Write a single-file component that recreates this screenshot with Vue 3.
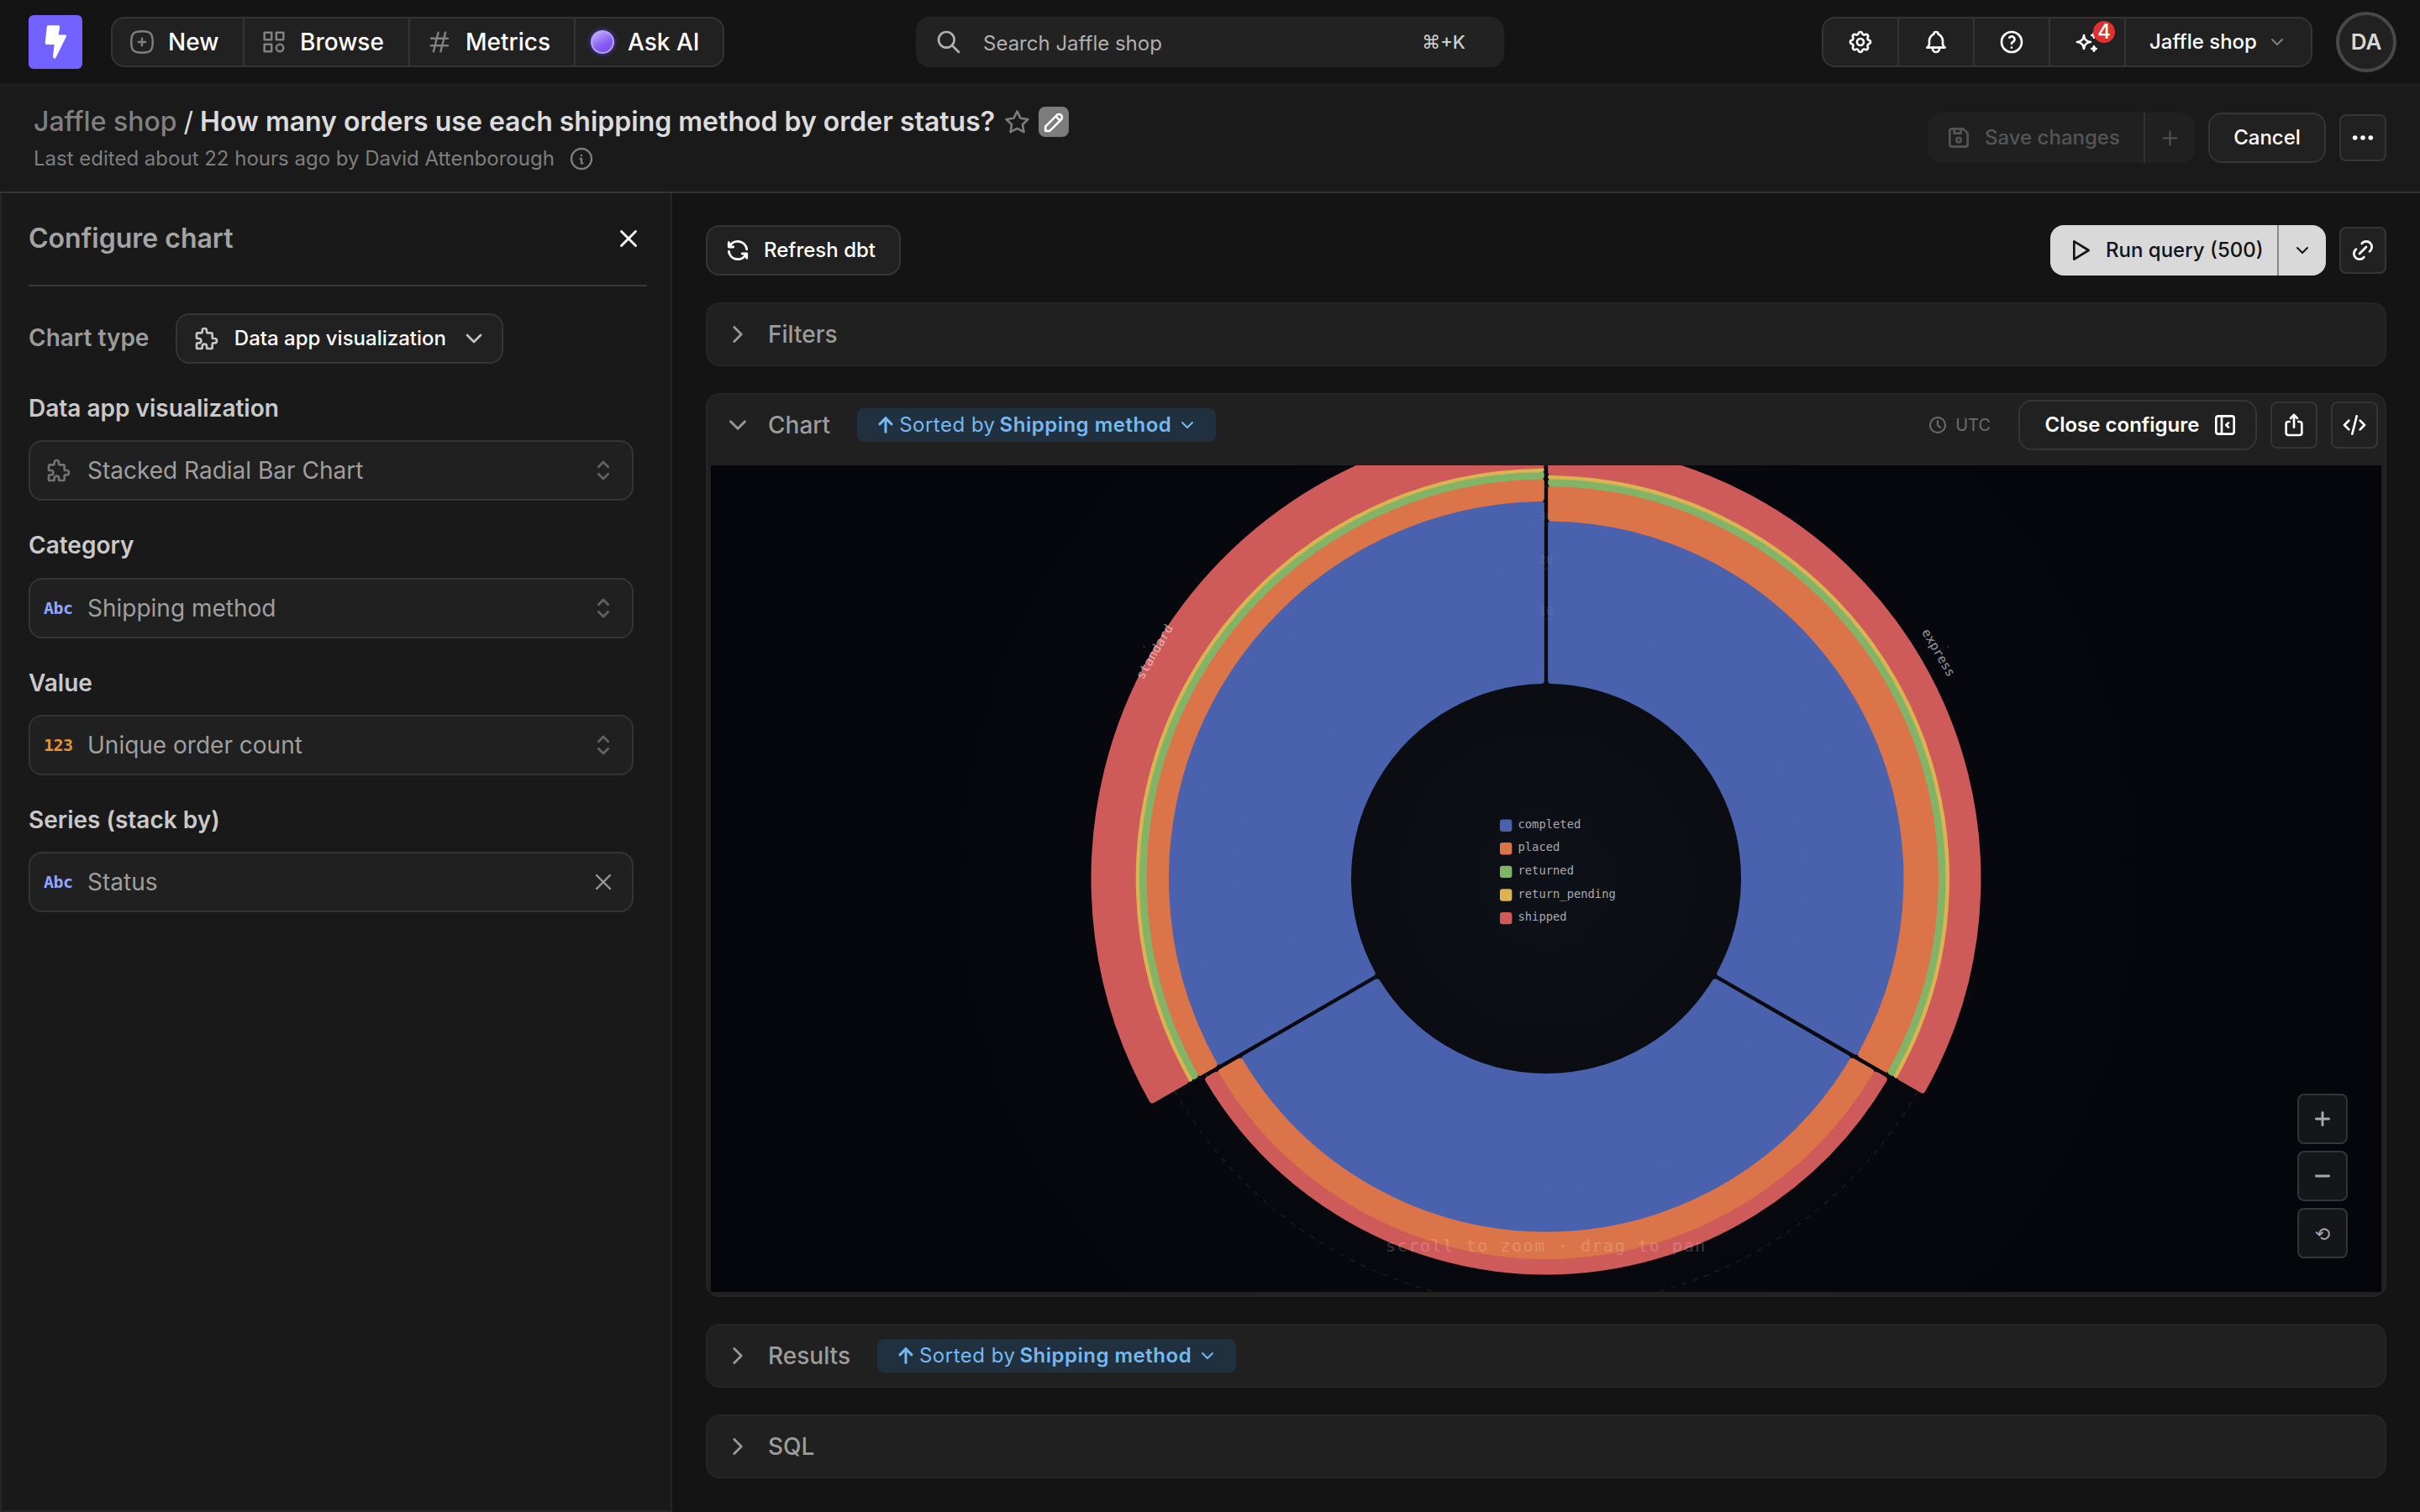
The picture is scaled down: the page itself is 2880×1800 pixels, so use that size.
<script setup>
import { h } from "vue";

const circle = "M12 12m-9 0a9 9 0 1 0 18 0a9 9 0 1 0 -18 0";

const icons = {
	plusBox: ["M9 12h6", "M12 9v6", "M12 3c7.2 0 9 1.8 9 9s-1.8 9 -9 9s-9 -1.8 -9 -9s1.8 -9 9 -9z"],
	category: ["M4 4h6v6h-6z", "M14 4h6v6h-6z", "M4 14h6v6h-6z", "M17 17m-3 0a3 3 0 1 0 6 0a3 3 0 1 0 -6 0"],
	hash: ["M5 9h14", "M5 15h14", "M11 4l-4 16", "M17 4l-4 16"],
	search: ["M10 10m-7 0a7 7 0 1 0 14 0a7 7 0 1 0 -14 0", "M21 21l-6 -6"],
	settings: [
		"M10.325 4.317c.426 -1.756 2.924 -1.756 3.35 0a1.724 1.724 0 0 0 2.573 1.066c1.543 -.94 3.31 .826 2.37 2.37a1.724 1.724 0 0 0 1.065 2.572c1.756 .426 1.756 2.924 0 3.35a1.724 1.724 0 0 0 -1.066 2.573c.94 1.543 -.826 3.31 -2.37 2.37a1.724 1.724 0 0 0 -2.572 1.065c-.426 1.756 -2.924 1.756 -3.35 0a1.724 1.724 0 0 0 -2.573 -1.066c-1.543 .94 -3.31 -.826 -2.37 -2.37a1.724 1.724 0 0 0 -1.065 -2.572c-1.756 -.426 -1.756 -2.924 0 -3.35a1.724 1.724 0 0 0 1.066 -2.573c-.94 -1.543 .826 -3.31 2.37 -2.37c1 .608 2.296 .07 2.572 -1.065z",
		"M9 12a3 3 0 1 0 6 0a3 3 0 0 0 -6 0",
	],
	bell: [
		"M10 5a2 2 0 1 1 4 0a7 7 0 0 1 4 6v3a4 4 0 0 0 2 3h-16a4 4 0 0 0 2 -3v-3a7 7 0 0 1 4 -6",
		"M9 17v1a3 3 0 0 0 6 0v-1",
	],
	help: [circle, "M12 17v.01", "M12 13.5a1.5 1.5 0 0 1 1 -1.5a2.6 2.6 0 1 0 -3 -4"],
	sparkles: [
		"M16 18a2 2 0 0 1 2 2a2 2 0 0 1 2 -2a2 2 0 0 1 -2 -2a2 2 0 0 1 -2 2z",
		"M16 6a2 2 0 0 1 2 2a2 2 0 0 1 2 -2a2 2 0 0 1 -2 -2a2 2 0 0 1 -2 2z",
		"M9 18a6 6 0 0 1 6 -6a6 6 0 0 1 -6 -6a6 6 0 0 1 -6 6a6 6 0 0 1 6 6z",
	],
	star: ["M12 17.75l-6.172 3.245l1.179 -6.873l-5 -4.867l6.9 -1l3.086 -6.253l3.086 6.253l6.9 1l-5 4.867l1.179 6.873z"],
	pencil: ["M4 20h4l10.5 -10.5a2.828 2.828 0 1 0 -4 -4l-10.5 10.5v4", "M13.5 6.5l4 4"],
	info: [circle, "M12 9h.01", "M11 12h1v4h1"],
	floppy: [
		"M6 4h10l4 4v10a2 2 0 0 1 -2 2h-12a2 2 0 0 1 -2 -2v-12a2 2 0 0 1 2 -2",
		"M12 14m-2 0a2 2 0 1 0 4 0a2 2 0 1 0 -4 0",
		"M14 4v4h-6v-4",
	],
	plus: ["M12 5v14", "M5 12h14"],
	minus: ["M5 12h14"],
	dots: ["M5 12m-1 0a1 1 0 1 0 2 0a1 1 0 1 0 -2 0", "M12 12m-1 0a1 1 0 1 0 2 0a1 1 0 1 0 -2 0", "M19 12m-1 0a1 1 0 1 0 2 0a1 1 0 1 0 -2 0"],
	close: ["M18 6l-12 12", "M6 6l12 12"],
	puzzle: [
		"M4 7h3a1 1 0 0 0 1 -1v-1a2 2 0 0 1 4 0v1a1 1 0 0 0 1 1h3a1 1 0 0 1 1 1v3a1 1 0 0 0 1 1h1a2 2 0 0 1 0 4h-1a1 1 0 0 0 -1 1v3a1 1 0 0 1 -1 1h-3a1 1 0 0 1 -1 -1v-1a2 2 0 0 0 -4 0v1a1 1 0 0 1 -1 1h-3a1 1 0 0 1 -1 -1v-3a1 1 0 0 1 1 -1h1a2 2 0 0 0 0 -4h-1a1 1 0 0 1 -1 -1v-3a1 1 0 0 1 1 -1",
	],
	chevronDown: ["M6 9l6 6l6 -6"],
	chevronRight: ["M9 6l6 6l-6 6"],
	selector: ["M8 9l4 -4l4 4", "M16 15l-4 4l-4 -4"],
	refresh: ["M20 11a8.1 8.1 0 0 0 -15.5 -2m-.5 -4v4h4", "M4 13a8.1 8.1 0 0 0 15.5 2m.5 4v-4h-4"],
	play: ["M7 4v16l13 -8z"],
	link: [
		"M9 15l6 -6",
		"M11 6l.463 -.536a5 5 0 0 1 7.071 7.072l-.534 .464",
		"M13 18l-.397 .534a5.068 5.068 0 0 1 -7.127 0a4.972 4.972 0 0 1 0 -7.071l.524 -.463",
	],
	arrowUp: ["M12 5v14", "M18 11l-6 -6", "M6 11l6 -6"],
	clock: [circle, "M12 7v5l3 3"],
	collapse: [
		"M4 6a2 2 0 0 1 2 -2h12a2 2 0 0 1 2 2v12a2 2 0 0 1 -2 2h-12a2 2 0 0 1 -2 -2z",
		"M9 4v16",
		"M15 10l-2 2l2 2",
	],
	share: ["M8 9h-1a2 2 0 0 0 -2 2v8a2 2 0 0 0 2 2h10a2 2 0 0 0 2 -2v-8a2 2 0 0 0 -2 -2h-1", "M12 14v-11", "M9 6l3 -3l3 3"],
	code: ["M7 8l-4 4l4 4", "M17 8l4 4l-4 4", "M14 4l-4 16"],
};

function Icon({ name, size = 32, stroke = 2 }) {
	return h(
		"svg",
		{
			width: size,
			height: size,
			viewBox: "0 0 24 24",
			fill: "none",
			stroke: "currentColor",
			"stroke-width": stroke,
			"stroke-linecap": "round",
			"stroke-linejoin": "round",
		},
		icons[name].map((d) => h("path", { d }))
	);
}
Icon.props = ["name", "size", "stroke"];

const fields = [
	{ label: "Data app visualization", value: "Stacked Radial Bar Chart", type: "viz" },
	{ label: "Category", value: "Shipping method", type: "Abc" },
	{ label: "Value", value: "Unique order count", type: "123" },
	{ label: "Series (stack by)", value: "Status", type: "Abc", clearable: true },
];

const series = [
	{ name: "completed", color: "#4a62ae" },
	{ name: "placed", color: "#db7549" },
	{ name: "returned", color: "#82b468" },
	{ name: "return_pending", color: "#dbb350" },
	{ name: "shipped", color: "#cf5a5a" },
];

// outer radius of every stacked ring, null when the series has no orders
const INNER = 232.5;
const bars = [
	{ start: 0, end: 120, radii: [426, 467.5, 476, 480.5, 517] },
	{ start: 120, end: 240, radii: [421, 453.5, null, null, 471] },
	{ start: 240, end: 360, radii: [449.5, 476, 484.5, 488.8, 541] },
];

const gridRings = [309, 369, 421, 467, 509.5];
const ticks = [
	{ label: "10", y: -314 },
	{ label: "20", y: -375 },
	{ label: "30", y: -427 },
];

function point(r, a) {
	return `${(r * Math.sin(a)).toFixed(2)} ${(-r * Math.cos(a)).toFixed(2)}`;
}

// the ring is inset by half its stroke, the round joins give the soft corners
function ring(start, end, r0, r1, inset) {
	const a0 = (start * Math.PI) / 180;
	const a1 = (end * Math.PI) / 180;
	const lo = r0 + inset;
	const hi = r1 - inset;
	const gap = 2.2 + inset;
	const pLo = Math.asin(gap / lo);
	const pHi = Math.asin(gap / hi);
	return `M${point(lo, a0 + pLo)}L${point(hi, a0 + pHi)}A${hi} ${hi} 0 0 1 ${point(hi, a1 - pHi)}L${point(lo, a1 - pLo)}A${lo} ${lo} 0 0 0 ${point(lo, a0 + pLo)}Z`;
}

// neighbouring rings overlap a little so that no seam shows between them
const OVERLAP = 0.5;

const arcs = bars.flatMap((bar) => {
	let from = INNER;
	return bar.radii.flatMap((to, i) => {
		if (to === null) return [];
		const lo = from - OVERLAP;
		const hi = to + OVERLAP;
		const inset = Math.min(4, (hi - lo) / 2 - 0.2);
		const arc = { d: ring(bar.start, bar.end, lo, hi, inset), color: series[i].color, width: inset * 2 };
		from = to;
		return [arc];
	});
});
</script>

<template>
	<div class="app">
		<header class="topbar">
			<div class="left">
				<svg class="logo" viewBox="0 0 64 64">
					<path d="M23.2 12.3h12.6q1.6 0 1.4 1.6l-1.6 9.6h8q1.8.2 1.3 2l-12.4 25q-.9 1.6-2.3 1q-1.4-.6-1.2-2l1.6-14.6h-9.2q-1.9-.2-1.7-2l2-19q.2-1.6 1.5-1.6z" />
				</svg>
				<nav class="group">
					<a class="cell new"><Icon name="plusBox" size="34" stroke="1.7" />New</a>
					<a class="cell wide"><Icon name="category" size="34" stroke="1.8" />Browse</a>
					<a class="cell wide"><Icon name="hash" size="34" stroke="1.7" />Metrics</a>
					<a class="cell ask"><span class="orb"></span>Ask AI</a>
				</nav>
			</div>
			<div class="search">
				<Icon name="search" />
				<span>Search Jaffle shop</span>
				<kbd><i>⌘</i>+K</kbd>
			</div>
			<div class="right">
				<div class="group tools">
					<a class="tool"><Icon name="settings" /></a>
					<a class="tool"><Icon name="bell" /></a>
					<a class="tool"><Icon name="help" /></a>
					<a class="tool"><Icon name="sparkles" /><b class="count">4</b></a>
					<a class="project">Jaffle shop<Icon name="chevronDown" size="24" /></a>
				</div>
				<div class="avatar">DA</div>
			</div>
		</header>

		<section class="pagehead">
			<div>
				<h1>
					<span class="crumb">Jaffle shop</span><span class="slash">/</span>How many orders use each shipping method by order status?
					<Icon class="star" name="star" size="31" />
					<span class="edit"><Icon name="pencil" size="31" /></span>
				</h1>
				<p>Last edited about 22 hours ago by David Attenborough <Icon name="info" stroke="1.8" /></p>
			</div>
			<div class="actions">
				<div class="save">
					<span class="save-main"><Icon name="floppy" />Save changes</span>
					<span class="save-add"><Icon name="plus" size="27" stroke="1.8" /></span>
				</div>
				<button class="btn cancel">Cancel</button>
				<button class="square"><Icon name="dots" stroke="2.2" /></button>
			</div>
		</section>

		<div class="body">
			<aside class="config">
				<div class="config-head">
					<h2>Configure chart</h2>
					<Icon name="close" size="34" />
				</div>
				<div class="chart-type">
					<span>Chart type</span>
					<button class="btn type-btn">
						<Icon name="puzzle" />
						Data app visualization
						<Icon name="chevronDown" />
					</button>
				</div>
				<div class="field" v-for="field in fields" :key="field.label">
					<label>{{ field.label }}</label>
					<div class="select">
						<span class="kind">
							<Icon v-if="field.type === 'viz'" name="puzzle" />
							<b v-else :class="field.type === '123' ? 'number' : 'text'">{{ field.type }}</b>
						</span>
						<span class="value">{{ field.value }}</span>
						<Icon v-if="field.clearable" class="clear" name="close" stroke="1.8" />
						<Icon v-else class="caret" name="selector" size="34" />
					</div>
				</div>
			</aside>

			<main>
				<div class="toolbar">
					<button class="btn refresh"><Icon name="refresh" stroke="2.2" />Refresh dbt</button>
					<div class="run">
						<span class="run-main"><Icon name="play" />Run query (500)</span>
						<span class="run-menu"><Icon name="chevronDown" size="24" /></span>
					</div>
					<button class="square"><Icon name="link" /></button>
				</div>

				<section class="card">
					<div class="card-head"><Icon name="chevronRight" size="34" /><h3>Filters</h3></div>
				</section>

				<section class="card chart-card">
					<div class="card-head">
						<Icon name="chevronDown" size="34" />
						<h3>Chart</h3>
						<span class="sort"><Icon name="arrowUp" size="28" stroke="2.6" />Sorted by<b>Shipping method</b><Icon name="chevronDown" size="24" /></span>
						<span class="tz"><Icon name="clock" size="24" />UTC</span>
						<button class="btn close-config">Close configure<Icon name="collapse" /></button>
						<button class="square"><Icon name="share" /></button>
						<button class="square code"><Icon name="code" /></button>
					</div>
					<div class="canvas">
						<svg class="radial" viewBox="-994 -492 1988 984">
							<circle v-for="r in gridRings" :key="r" class="grid" :r="r" />
							<path v-for="(arc, i) in arcs" :key="i" :d="arc.d" :fill="arc.color" :stroke="arc.color" :stroke-width="arc.width" stroke-linejoin="round" />
							<circle v-for="r in gridRings.slice(0, 4)" :key="'o' + r" class="grid over" :r="r" />
							<text v-for="tick in ticks" :key="tick.label" class="tick" :y="tick.y">{{ tick.label }}</text>
							<path class="mark" d="M477 -275l3 -2M-477 -275l-3 -2" />
							<text class="cat" transform="translate(467 -269) rotate(60)" y="5">express</text>
							<text class="cat" transform="translate(-466 -270) rotate(-60)" y="5">standard</text>
							<g v-for="(s, i) in series" :key="s.name" :transform="`translate(-55 ${-70.5 + i * 27.6})`">
								<rect width="14.4" height="14.4" rx="3" :fill="s.color" />
								<text class="legend" x="21.5" y="10.3">{{ s.name }}</text>
							</g>
							<text class="hint" y="444">scroll to zoom · drag to pan</text>
						</svg>
						<div class="zoom">
							<button><Icon name="plus" size="26" stroke="2.7" /></button>
							<button><Icon name="minus" size="26" stroke="2.7" /></button>
							<button class="reset">⟲</button>
						</div>
					</div>
				</section>

				<section class="card">
					<div class="card-head">
						<Icon name="chevronRight" size="34" />
						<h3>Results</h3>
						<span class="sort"><Icon name="arrowUp" size="28" stroke="2.6" />Sorted by<b>Shipping method</b><Icon name="chevronDown" size="24" /></span>
					</div>
				</section>

				<section class="card">
					<div class="card-head"><Icon name="chevronRight" size="34" /><h3>SQL</h3></div>
				</section>
			</main>
		</div>
	</div>
</template>

<style>
body {
	background: #141414;
}
</style>

<style scoped>
* {
	box-sizing: border-box;
}

.app {
	width: 2880px;
	height: 1800px;
	display: flex;
	flex-direction: column;
	overflow: hidden;
	background: #141414;
	color: #fff;
	font-family: Inter, sans-serif;
	font-size: 24px;
	line-height: 30px;
}

svg {
	flex: none;
	display: block;
}

h1,
h2,
h3,
p {
	margin: 0;
}

button {
	font: inherit;
	color: inherit;
	padding: 0;
}

/* top bar */
.topbar {
	height: 102px;
	padding: 0 28px 0 34px;
	border-bottom: 2px solid #202020;
	display: grid;
	grid-template-columns: 1056px 700px 1fr;
	align-items: center;
}

.left,
.right {
	display: flex;
	align-items: center;
}

.left {
	gap: 34px;
}

.right {
	justify-content: flex-end;
	gap: 28px;
}

.logo {
	width: 64px;
	height: 64px;
	border-radius: 6px;
	background: #7262ff;
	fill: #fff;
}

.group {
	display: flex;
	height: 60px;
	border: 2px solid #343434;
	border-radius: 16px;
	background: #212121;
}

.cell {
	display: flex;
	align-items: center;
	gap: 14px;
	padding-left: 18px;
	border-right: 2px solid #343434;
	font-size: 28px;
	font-weight: 500;
}

.cell svg {
	color: #808080;
}

.new {
	width: 157px;
}

.wide {
	width: 197px;
}

.ask {
	width: 175px;
	gap: 16px;
	border-right: 0;
}

.orb {
	width: 28px;
	height: 28px;
	border-radius: 50%;
	border: 2px solid #b7a0fa;
	background: linear-gradient(150deg, #c0aefc 5%, #8a63f4 55%, #7443ee);
	box-shadow: 0 0 6px #5a3bc0;
}

.search {
	height: 60px;
	display: flex;
	align-items: center;
	padding: 0 46px 0 23px;
	border-radius: 16px;
	background: #222;
	color: #b0b0b0;
}

.search span {
	margin-left: 25px;
	padding-top: 3px;
	flex: 1;
}

kbd {
	font: 500 22px Inter, sans-serif;
	color: #d0d0d0;
}

kbd i {
	font: 22px "DejaVu Sans", sans-serif;
	line-height: 1;
}

.tool {
	position: relative;
	width: 90px;
	display: flex;
	align-items: center;
	justify-content: center;
	border-right: 2px solid #343434;
}

.count {
	position: absolute;
	top: 3px;
	right: 11px;
	width: 26px;
	height: 26px;
	border-radius: 50%;
	background: #e03131;
	font-size: 24px;
	font-weight: 500;
	line-height: 26px;
	text-align: center;
}

.project {
	width: 220px;
	display: flex;
	align-items: center;
	gap: 12px;
	padding-left: 28px;
	font-weight: 500;
}

.project svg {
	color: #808080;
}

.avatar {
	width: 72px;
	height: 72px;
	border: 4px solid #484848;
	border-radius: 50%;
	background: #212121;
	color: #d8d8d8;
	font-size: 26px;
	font-weight: 600;
	line-height: 64px;
	text-align: center;
}

/* title row */
.pagehead {
	height: 128px;
	display: flex;
	justify-content: space-between;
	padding: 21px 40px 0;
	background: #1a1a1a;
	border-bottom: 2px solid #343434;
}

.pagehead h1 {
	display: flex;
	align-items: center;
	height: 44px;
	color: #dcdcdc;
	font-size: 32px;
	font-weight: 600;
	white-space: nowrap;
}

.crumb {
	color: #808080;
	font-weight: 500;
}

.slash {
	margin: 0 8px;
	font-weight: 400;
}

.star {
	margin-left: 11px;
	color: #7c7c7c;
}

.edit {
	width: 36px;
	height: 36px;
	margin-left: 10px;
	display: flex;
	align-items: center;
	justify-content: center;
	border-radius: 8px;
	background: #7c7c7c;
	color: #fff;
}

.pagehead p {
	display: flex;
	align-items: center;
	gap: 16px;
	height: 44px;
	color: #7e7e7e;
}

.actions {
	display: flex;
	align-items: center;
	gap: 16px;
	height: 60px;
	margin-top: 11px;
}

.save {
	display: flex;
	height: 60px;
	border-radius: 16px;
	background: #202020;
	color: #555;
	font-weight: 500;
}

.save-main {
	width: 259px;
	display: flex;
	align-items: center;
	gap: 15px;
	padding-left: 21px;
	border-right: 2px solid #333;
}

.save-add {
	width: 59px;
	display: flex;
	align-items: center;
	justify-content: center;
}

.btn {
	height: 60px;
	display: flex;
	align-items: center;
	justify-content: center;
	border: 2px solid #353535;
	border-radius: 16px;
	background: #212121;
	font-weight: 500;
	white-space: nowrap;
}

.cancel {
	width: 140px;
}

.square {
	width: 56px;
	height: 56px;
	display: flex;
	align-items: center;
	justify-content: center;
	border: 2px solid #353535;
	border-radius: 8px;
	background: #212121;
}

/* sidebar */
.body {
	flex: 1;
	display: flex;
	min-height: 0;
}

.config {
	width: 800px;
	padding: 0 44px 0 32px;
	border: 2px solid #262626;
	border-top: 0;
	background: #191919;
}

.config-head {
	height: 111px;
	margin-right: -16px;
	padding: 0 5px 1px 0;
	display: flex;
	align-items: center;
	justify-content: space-between;
	border-bottom: 2px solid #383838;
}

.config-head h2 {
	color: #a4a4a4;
	font-size: 32px;
	font-weight: 600;
}

.chart-type {
	display: flex;
	align-items: center;
	gap: 32px;
	margin-top: 32px;
	color: #9c9c9c;
	font-size: 28px;
	font-weight: 600;
}

.chart-type > span {
	padding-bottom: 2px;
}

.type-btn {
	width: 390px;
	gap: 17px;
	padding-left: 1px;
	font-size: 24px;
	color: #fff;
}

.type-btn svg {
	color: #c4c4c4;
}

.field label {
	display: block;
	height: 91.3px;
	padding-top: 36px;
	color: #c9c9c9;
	font-size: 28px;
	font-weight: 600;
	line-height: 34px;
}

.select {
	display: flex;
	align-items: center;
	height: 72px;
	padding: 0 18px 0 18px;
	border: 2px solid #343434;
	border-radius: 16px;
	background: #202020;
	color: #9f9f9f;
	font-size: 28px;
}

.kind {
	width: 50px;
}

.kind svg {
	color: #727272;
}

.kind b {
	display: block;
	margin-left: -2px;
	font: 700 20px "DejaVu Sans Mono", monospace;
	letter-spacing: -0.6px;
}

.kind .text {
	color: #91a7ff;
}

.kind .number {
	color: #e8912d;
}

.value {
	flex: 1;
}

.caret {
	color: #606060;
	margin-right: -1px;
}

.clear {
	color: #989898;
}

/* explorer */
main {
	flex: 1;
	display: flex;
	flex-direction: column;
	gap: 32px;
	padding: 38px 40px 40px;
}

.toolbar {
	height: 60px;
	display: flex;
	align-items: center;
	gap: 16px;
}

.refresh {
	width: 232px;
	gap: 15px;
	padding-right: 8px;
}

.run {
	display: flex;
	height: 60px;
	margin-left: auto;
	border-radius: 16px;
	background: #d9d9d9;
	color: #141414;
	font-weight: 500;
}

.run-main {
	width: 272px;
	display: flex;
	align-items: center;
	gap: 15px;
	padding-left: 19px;
	border-right: 2px solid #888;
}

.run-menu {
	width: 56px;
	display: flex;
	align-items: center;
	justify-content: center;
}

.card {
	height: 76px;
	border: 2px solid #252525;
	border-radius: 16px;
	background: #202020;
}

.chart-card {
	height: 1076px;
	padding: 0 4px 4px;
}

.card-head {
	display: flex;
	align-items: center;
	height: 72px;
	padding-left: 19px;
	color: #989898;
}

.chart-card .card-head {
	height: 84px;
	padding: 0 4px 12px 15px;
}

.card-head h3 {
	margin-left: 19px;
	color: #9c9c9c;
	font-size: 28px;
	font-weight: 500;
}

.sort {
	display: flex;
	align-items: center;
	height: 40px;
	margin-left: 32px;
	padding: 0 22px 0 20px;
	border-radius: 8px;
	background: #21303f;
	color: #74b9f2;
	letter-spacing: 0.5px;
	white-space: nowrap;
}

.sort svg:first-child {
	margin-right: 2px;
}

.sort b {
	margin: 0 7px 0 5px;
	font-weight: 600;
}

.tz {
	display: flex;
	align-items: center;
	gap: 9px;
	margin-left: auto;
	color: #6c6c6c;
	font-size: 20px;
}

.close-config {
	width: 284px;
	gap: 15px;
	margin-left: 33px;
	padding-left: 10px;
	font-weight: 600;
	color: #fff;
}

.card-head .square {
	margin-left: 16px;
	color: #fff;
}

.canvas {
	position: relative;
	height: 984px;
	background: radial-gradient(circle at 50% 50%, #0d1117 0, #0c0d12 220px, #05070c 600px, #05060b);
}

.radial {
	width: 1988px;
	height: 984px;
	font-family: "DejaVu Sans Mono", monospace;
}

.grid {
	fill: none;
	stroke: #191b1f;
	stroke-width: 1.6;
	stroke-dasharray: 6 8;
}

.over {
	stroke: #fff;
	opacity: 0.02;
}

.tick {
	fill: #8d95a8;
	font-size: 14px;
	opacity: 0.22;
	text-anchor: middle;
}

.mark {
	stroke: #2b2d31;
	stroke-width: 1.5;
}

.cat {
	fill: #e4e4e4;
	font-size: 15px;
	opacity: 0.65;
	text-anchor: middle;
}

.legend {
	fill: #a9aaad;
	font-size: 13.8px;
}

.hint {
	fill: #fff;
	font-size: 20px;
	letter-spacing: 1.6px;
	opacity: 0.18;
	text-anchor: middle;
}

.zoom {
	position: absolute;
	right: 40px;
	bottom: 40px;
	display: flex;
	flex-direction: column;
	gap: 8px;
}

.zoom button {
	width: 60px;
	height: 60px;
	display: flex;
	align-items: center;
	justify-content: center;
	border: 2px solid #333437;
	border-radius: 8px;
	background: #15161a;
	color: #a7a8aa;
	font: 22px "DejaVu Sans", sans-serif;
}

.zoom .reset {
	padding-top: 3px;
}
</style>
